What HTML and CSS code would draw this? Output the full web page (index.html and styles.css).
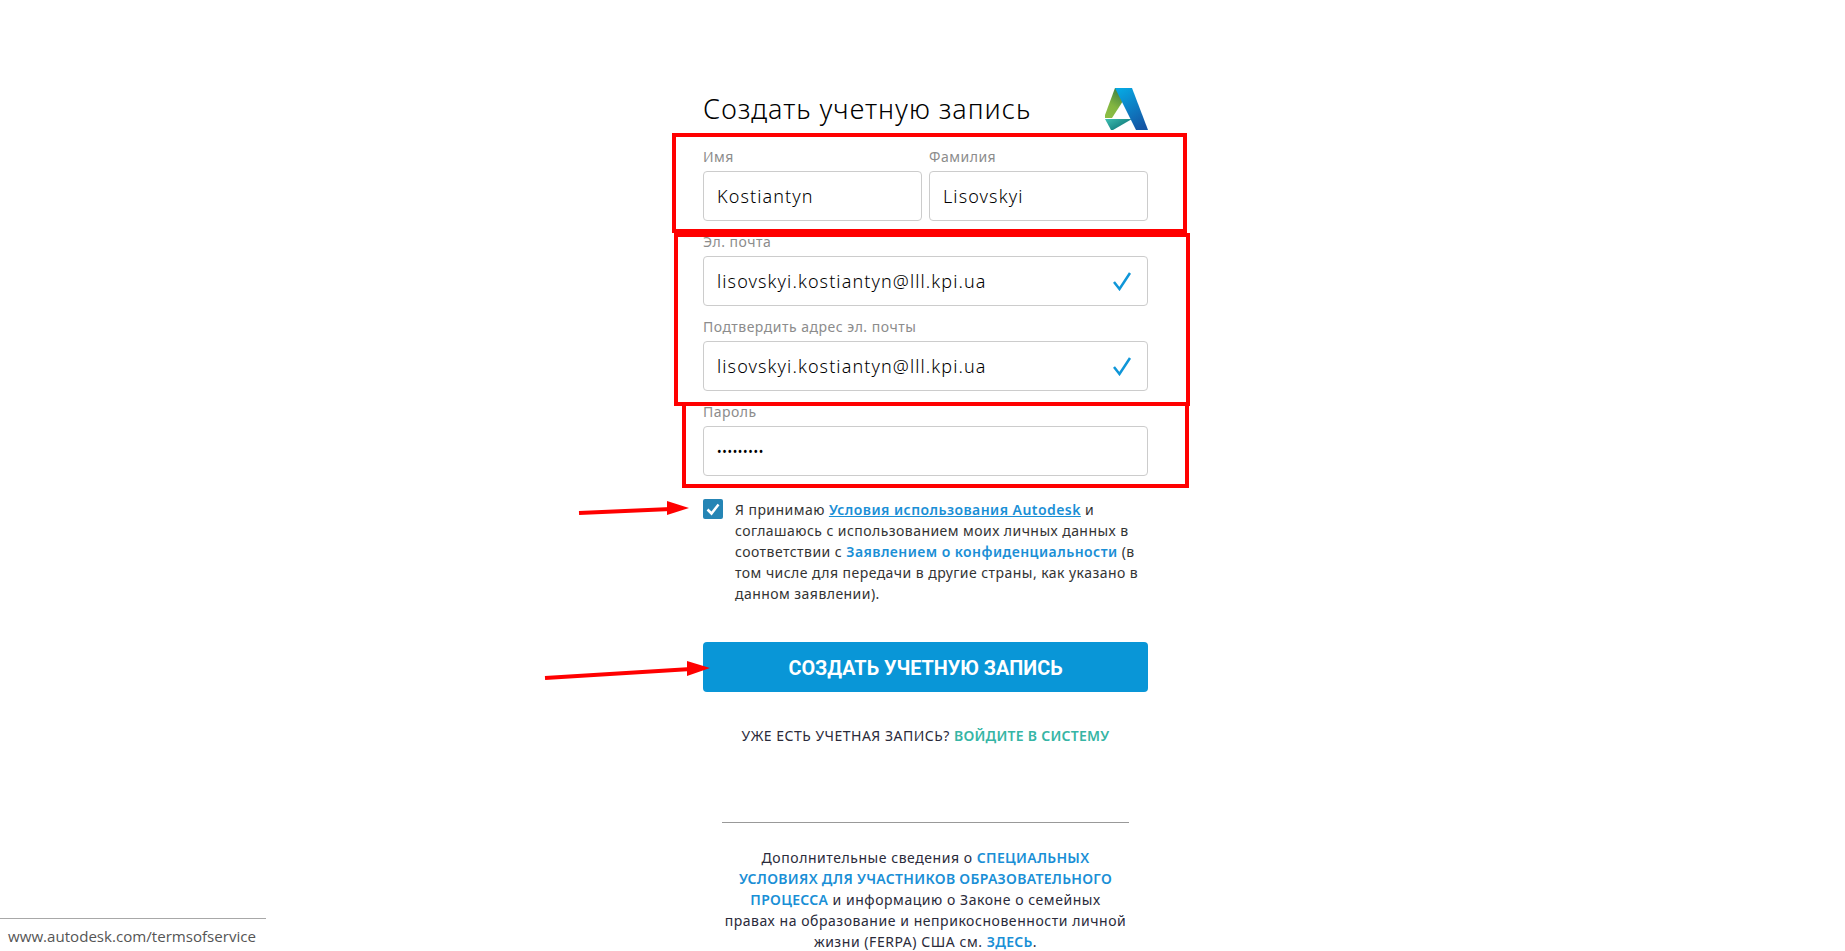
FILE: index.html
```html
<!DOCTYPE html>
<html lang="ru">

<head>
  <meta charset="UTF-8">
  <meta name="viewport" content="width=device-width, initial-scale=1.0">
  <title>Создать учетную запись</title>
  <link rel="stylesheet" href="styles.css">
</head>

<body>
  <main class="signup">
    <header class="signup-head">
      <h1 class="signup-title">Создать учетную запись</h1>
      <svg class="logo" viewBox="0 0 45 44" width="45" height="44" aria-label="Autodesk">
        <defs>
          <linearGradient id="logo-blue" x1="0.2" y1="0" x2="0.7" y2="1">
            <stop offset="0" stop-color="#06a7e2" />
            <stop offset="1" stop-color="#1556a5" />
          </linearGradient>
          <linearGradient id="logo-green" x1="0.7" y1="0" x2="0.3" y2="1">
            <stop offset="0" stop-color="#3d7f42" />
            <stop offset="0.6" stop-color="#82b541" />
            <stop offset="1" stop-color="#8cbd44" />
          </linearGradient>
          <linearGradient id="logo-teal" x1="0" y1="0" x2="0.8" y2="0.6">
            <stop offset="0" stop-color="#3fbfb2" />
            <stop offset="1" stop-color="#13807f" />
          </linearGradient>
        </defs>
        <path fill="url(#logo-green)" d="M11 1h3l5 13-11 17H1v-3z" />
        <path fill="url(#logo-teal)" d="M1 32h27L9 43H7z" />
        <path fill="url(#logo-blue)" d="M11 1h17l16 42H32z" />
      </svg>
    </header>

    <div class="field-row">
      <div class="field">
        <label class="field-label">Имя</label>
        <div class="field-box">Kostiantyn</div>
      </div>
      <div class="field">
        <label class="field-label">Фамилия</label>
        <div class="field-box">Lisovskyi</div>
      </div>
    </div>

    <div class="field">
      <label class="field-label">Эл. почта</label>
      <div class="field-box">
        lisovskyi.kostiantyn@lll.kpi.ua
        <svg class="check" viewBox="0 0 20 20" width="20" height="20"><path d="M2 11l5.500 7L18 2" /></svg>
      </div>
    </div>

    <div class="field">
      <label class="field-label">Подтвердить адрес эл. почты</label>
      <div class="field-box">
        lisovskyi.kostiantyn@lll.kpi.ua
        <svg class="check" viewBox="0 0 20 20" width="20" height="20"><path d="M2 11l5.500 7L18 2" /></svg>
      </div>
    </div>

    <div class="field">
      <label class="field-label">Пароль</label>
      <div class="field-box field-box-password">•••••••••</div>
    </div>

    <div class="terms">
      <span class="terms-box">
        <svg viewBox="0 0 20 20" width="20" height="20"><path d="M4.500 10.500l4 4 7-9" /></svg>
      </span>
      <p class="terms-text">Я принимаю <a class="link-under" href="#">Условия использования Autodesk</a> и соглашаюсь с использованием моих личных данных в соответствии с <a class="link" href="#">Заявлением о конфиденциальности</a> (в том числе для передачи в другие страны, как указано в данном заявлении).</p>
    </div>

    <button class="btn-create">СОЗДАТЬ УЧЕТНУЮ ЗАПИСЬ</button>

    <p class="signin">УЖЕ ЕСТЬ УЧЕТНАЯ ЗАПИСЬ? <a href="#">ВОЙДИТЕ В СИСТЕМУ</a></p>

    <hr class="divider">

    <p class="notes">Дополнительные сведения о <a class="link" href="#">СПЕЦИАЛЬНЫХ УСЛОВИЯХ ДЛЯ УЧАСТНИКОВ ОБРАЗОВАТЕЛЬНОГО ПРОЦЕССА</a> и информацию о Законе о семейных правах на образование и неприкосновенности личной жизни (FERPA) США см. <a class="link" href="#">ЗДЕСЬ</a>.</p>
  </main>

  <!-- red marks drawn over the screenshot -->
  <svg class="marks" viewBox="0 0 1845 951" width="1845" height="951">
    <rect x="674" y="135" width="511" height="96" />
    <rect x="676" y="235" width="512" height="169" />
    <path class="marks-line" d="M684 405V486H1187V405" />
    <path class="marks-line" d="M579 513L671 509" />
    <path class="marks-head" d="M667 501L689 508L667 515z" />
    <path class="marks-line" d="M545 678L691 669" />
    <path class="marks-head" d="M687 661L710 668L687 676z" />
  </svg>

  <div class="status-bar">www.autodesk.com/termsofservice</div>
</body>

</html>
```

FILE: styles.css
```css
html,
body {
  margin: 0;
  height: 951px;
  overflow: hidden;
  background-color: #fff;
}

body {
  font-family: "Noto Sans", sans-serif;
  color: #2a2a3a;
}

a {
  text-decoration: none;
}

.signup {
  width: 445px;
  margin: 0 auto;
  padding: 87px 0 0 6px;
}

.signup-head {
  display: flex;
  justify-content: space-between;
  align-items: flex-start;
  height: 57px;
}

.signup-title {
  margin: 4px 0 0;
  font-size: 27px;
  line-height: 36px;
  font-weight: 300;
  letter-spacing: 1px;
  color: #000;
}

.logo {
  margin-right: -1px;
}

.field-row {
  display: flex;
  gap: 7px;
}

.field-row .field {
  flex: 1;
}

.field {
  margin-bottom: 8px;
}

.field-label {
  display: block;
  height: 27px;
  line-height: 25px;
  font-size: 14px;
  letter-spacing: 0.5px;
  color: #8c8c8c;
}

.field-box {
  display: flex;
  justify-content: space-between;
  align-items: center;
  box-sizing: border-box;
  height: 50px;
  padding: 0 15px 0 13px;
  border: 1px solid #ccc;
  border-radius: 4px;
  font-size: 18px;
  font-weight: 300;
  letter-spacing: 1.1px;
  color: #000;
}

.field-box-password {
  font-size: 12px;
  font-weight: 400;
  letter-spacing: 0.7px;
}

.check {
  fill: none;
  stroke: #0f96d8;
  stroke-width: 2.5;
}

.terms {
  display: flex;
  gap: 12px;
  margin-top: 23px;
}

.terms-box {
  flex: none;
  width: 20px;
  height: 20px;
  border-radius: 2px;
  background-color: #2585b5;
}

.terms-box svg {
  display: block;
  fill: none;
  stroke: #fff;
  stroke-width: 2.5;
}

.terms-text {
  margin: 0;
  font-size: 14px;
  line-height: 21px;
  letter-spacing: 0.45px;
  color: #333;
}

.link {
  font-weight: 600;
  color: #1a8fd6;
}

.link-under {
  font-weight: 600;
  color: #1a8fd6;
  text-decoration: underline;
}

.btn-create {
  display: block;
  width: 100%;
  height: 50px;
  margin-top: 38px;
  padding: 2px 0 0;
  border: 0;
  border-radius: 4px;
  background-color: #0996d7;
  font-family: "Roboto", sans-serif;
  font-size: 19.800px;
  font-weight: 700;
  color: #fff;
}

.signin {
  margin: 33px 0 0;
  text-align: center;
  font-size: 14px;
  line-height: 21px;
  letter-spacing: 0.5px;
}

.signin a {
  font-weight: 600;
  letter-spacing: 0.25px;
  color: #36b5a5;
}

.divider {
  width: 407px;
  height: 1px;
  margin: 76px auto 0;
  border: 0;
  background-color: #999;
}

.notes {
  width: 402px;
  margin: 24px auto 0;
  text-align: center;
  font-size: 14px;
  line-height: 21px;
  letter-spacing: 0.55px;
}

.notes .link {
  letter-spacing: 0.3px;
}

.marks {
  position: absolute;
  left: 0;
  top: 0;
  pointer-events: none;
}

.marks rect,
.marks-line {
  fill: none;
  stroke: #f00;
  stroke-width: 4;
}

.marks-head {
  fill: #f00;
}

.status-bar {
  position: fixed;
  left: 0;
  bottom: 0;
  box-sizing: border-box;
  width: 266px;
  height: 33px;
  padding-left: 8px;
  border-top: 1px solid #a8a8a8;
  background-color: #fff;
  font-family: "Open Sans", sans-serif;
  font-size: 15.100px;
  line-height: 34px;
  color: #555;
}
```
